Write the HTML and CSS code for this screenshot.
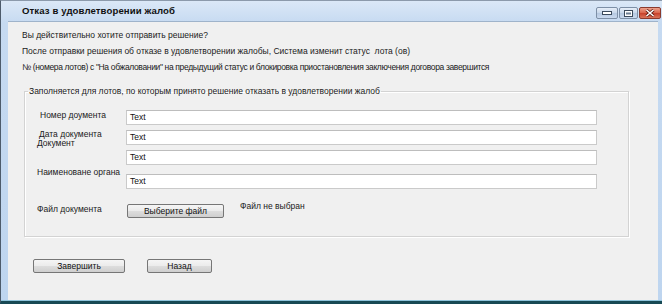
FILE: index.html
```html
<!DOCTYPE html>
<html lang="ru">
<head>
    <meta charset="UTF-8">
    <title>Отказ в удовлетворении жалоб</title>
    <link rel="stylesheet" href="styles.css">
</head>
<body>
    <div class="window">
        <!-- Title bar -->
        <div class="titlebar">
            <span class="title">Отказ в удовлетворении жалоб</span>
            <div class="caption-buttons">
                <span class="cap-btn cap-min"><svg width="10" height="4" viewBox="0 0 10 4"><rect x="0.5" y="0.5" width="9" height="3" fill="#fff" stroke="#3b4a5c"/></svg></span>
                <span class="cap-btn cap-max"><svg width="9" height="7" viewBox="0 0 9 7"><rect x="0.5" y="0.5" width="8" height="6" fill="#fff" stroke="#3b4a5c"/><rect x="2" y="2.5" width="5" height="2" fill="#6b7d92"/></svg></span>
                <span class="cap-btn cap-close"><svg width="10" height="8" viewBox="0 0 10 8"><path d="M1.5 1 L8.5 7 M8.5 1 L1.5 7" stroke="#5b1a10" stroke-width="3"/><path d="M1.5 1 L8.5 7 M8.5 1 L1.5 7" stroke="#fff" stroke-width="1.6"/></svg></span>
            </div>
        </div>

        <!-- Dialog content -->
        <div class="content">
            <p class="line">Вы действительно хотите отправить решение?</p>
            <p class="line">После отправки решения об отказе в удовлетворении жалобы, Система изменит статус &nbsp;лота (ов)</p>
            <p class="line line-narrow">№ (номера лотов) с "На обжаловании" на предыдущий статус и блокировка приостановления заключения договора завершится</p>

            <fieldset class="group">
                <legend>Заполняется для лотов, по которым принято решение отказать в удовлетворении жалоб</legend>
                <div class="fields">
                    <div class="row row-1">
                        <span class="label">Номер доумента</span>
                        <div class="input">Text</div>
                    </div>
                    <div class="row row-2">
                        <span class="label">Дата документа</span>
                        <div class="input">Text</div>
                    </div>
                    <div class="row row-3">
                        <span class="label">Документ</span>
                        <div class="input">Text</div>
                    </div>
                    <div class="row row-4">
                        <span class="label">Наименоване органа</span>
                        <div class="input">Text</div>
                    </div>
                    <div class="row row-file">
                        <span class="label">Файл документа</span>
                        <div class="file-pick">
                            <button class="btn btn-file">Выберите файл</button>
                            <span class="file-name">Файл не выбран</span>
                        </div>
                    </div>
                </div>
            </fieldset>

            <div class="actions">
                <button class="btn btn-finish">Завершить</button>
                <button class="btn btn-back">Назад</button>
            </div>
        </div>
    </div>
</body>
</html>
```

FILE: styles.css
```css
/* General Styles */
body {
    margin: 0;
    padding: 0;
    background: #bcd4ee;
    font-family: "Liberation Sans", Arial, sans-serif;
    font-size: 8.5px;
    color: #1a1a1a;
}

.window {
    width: 662px;
    height: 304px;
    box-sizing: border-box;
    display: flex;
    flex-direction: column;
    background: linear-gradient(to bottom, #dbe8f7 0, #c6daf1 22px, #bed5ef 100%);
    border-left: 1px solid #4d5b6b;
    border-top: 1px solid #8c9aab;
    border-bottom: 3px solid #174954;
    box-shadow: inset 0 -1px 0 #8ec4dc;
}

/* Title bar */
.titlebar {
    height: 20px;
    display: flex;
    align-items: flex-start;
    justify-content: space-between;
    box-sizing: border-box;
    padding-left: 21px;
}

.title {
    font-size: 9.6px;
    font-weight: bold;
    color: #111;
    line-height: 20px;
    letter-spacing: 0.1px;
}

.caption-buttons {
    display: flex;
    margin-top: 6px;
    margin-right: 1px;
    gap: 1px;
}

.cap-btn {
    height: 12px;
    display: flex;
    align-items: center;
    justify-content: center;
    box-sizing: border-box;
    border: 1px solid #7d8fa6;
    border-radius: 2px;
    background: linear-gradient(to bottom, #e6eef8 0, #c8d7ea 50%, #b5c8e0 51%, #c9d9ee 100%);
}

.cap-min { width: 22px; }
.cap-max { width: 19px; }

.cap-close {
    width: 22px;
    border-color: #8a3a2e;
    background: linear-gradient(to bottom, #eba08c 0, #d9644a 50%, #c8402a 51%, #d9745a 100%);
}

/* Content */
.content {
    flex: 1;
    margin: 0 4px 1px 7px;
    background: #f0f0f0;
    border-top: 1px solid #9fb3ca;
    padding: 5px 0 0 14px;
}

.line {
    margin: 0;
    line-height: 16px;
    white-space: nowrap;
}

.line-narrow {
    letter-spacing: -0.35px;
}

.group {
    margin: 10px 0 0 2px;
    width: 605px;
    height: 152px;
    box-sizing: border-box;
    padding: 0;
    border: 1px solid #d3d3d3;
    box-shadow: 1px 1px 0 #fff, inset 1px 1px 0 #fff;
}

.group legend {
    margin-left: 3px;
    padding: 0 1px;
    line-height: 12px;
}

.fields {
    padding: 13px 0 0 12px;
}

.row {
    display: flex;
    align-items: flex-start;
}

.label {
    width: 89px;
    line-height: 12px;
    white-space: nowrap;
    box-sizing: border-box;
}

.input {
    width: 471px;
    height: 15px;
    box-sizing: border-box;
    background: #fff;
    border: 1px solid #cacaca;
    border-top-color: #bdbdbd;
    padding-left: 3px;
    line-height: 13px;
    color: #111;
}

.row-1 .label { margin-top: -1px; padding-left: 3px; }
.row-2 { margin-top: 5px; }
.row-2 .label { margin-top: -2px; padding-left: 2px; }
.row-3 { margin-top: 5px; }
.row-3 .label { margin-top: -13px; }
.row-4 { margin-top: 9px; }
.row-4 .label { margin-top: -8px; }

.row-file {
    margin-top: 15px;
}

.row-file .label {
    margin-top: -1px;
}

.file-pick {
    display: flex;
    align-items: flex-start;
    margin-left: 1px;
}

.file-name {
    margin-left: 16px;
    margin-top: -4px;
    line-height: 12px;
}

/* Buttons */
.btn {
    font-family: "Liberation Sans", Arial, sans-serif;
    font-size: 8.5px;
    color: #111;
    height: 14px;
    padding: 0;
    box-sizing: border-box;
    border: 1px solid #767676;
    border-radius: 2px;
    background: linear-gradient(to bottom, #f5f5f5 0, #ebebeb 50%, #dddddd 51%, #cfcfcf 100%);
    line-height: 12px;
}

.btn-file {
    width: 97px;
}

.actions {
    display: flex;
    gap: 22px;
    margin: 22px 0 0 11px;
}

.btn-finish { width: 92px; }
.btn-back { width: 65px; }
```
